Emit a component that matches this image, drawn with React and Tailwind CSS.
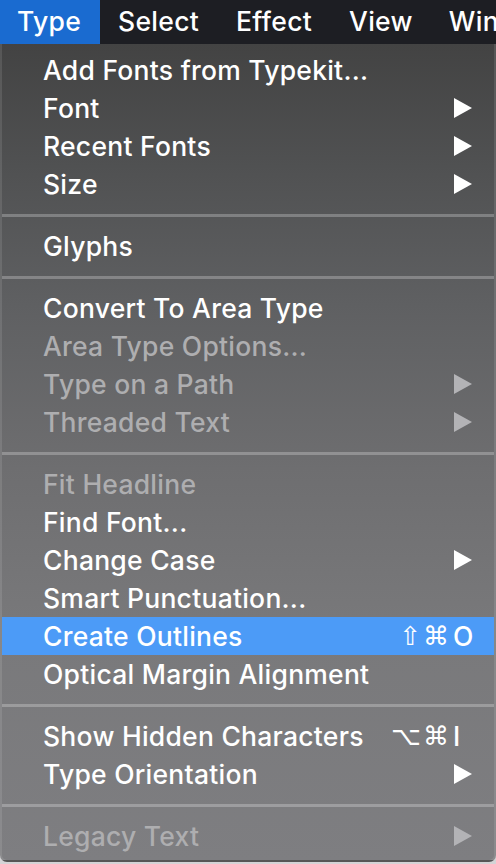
import React from "react";

const Arrow = ({ disabled }) => (
  <svg width="18" height="20" viewBox="0 0 18 20" className="shrink-0">
    <polygon points="0,0 18,10 0,20" fill={disabled ? "#b3b3b6" : "#ffffff"} />
  </svg>
);

const Row = ({ label, arrow, disabled, active, mods, keyChar }) => (
  <div
    className={`h-[38px] flex items-center pl-[41px] pr-[22px] ${
      active ? "bg-[#4c9bf7]" : ""
    }`}
  >
    <span
      className={`flex-1 text-[26.5px] font-medium leading-none tracking-[0.25px] whitespace-nowrap ${
        disabled ? "text-[#aeaeb0]" : "text-white"
      }`}
    >
      {label}
    </span>
    {arrow && <Arrow disabled={disabled} />}
    {mods && (
      <div className="flex items-center text-white leading-none">
        <span className="font-['DejaVu_Sans',sans-serif] text-[26px] tracking-[2px] mr-[2px]">{mods}</span>
        <span className="w-[19px] whitespace-nowrap text-[26.5px] font-medium">{keyChar}</span>
      </div>
    )}
  </div>
);

const Sep = () => (
  <div className="h-[24px] flex items-center">
    <div className="h-[3px] w-full bg-white/25" />
  </div>
);

export default function App() {
  return (
    <div className="w-[496px] h-[864px] bg-[#d4d4d6] overflow-hidden font-['Inter','Noto_Sans',sans-serif] flex flex-col">
      <div className="h-[44px] shrink-0 bg-[#1d1e23] flex items-stretch text-white text-[26.5px] font-medium tracking-[0.3px] overflow-hidden whitespace-nowrap">
        <div className="w-[100px] shrink-0 bg-[#1a6bd0] flex items-center pl-[17px]">Type</div>
        <div className="shrink-0 flex items-center pl-[18px] pr-[18px]">Select</div>
        <div className="shrink-0 flex items-center px-[19px]">Effect</div>
        <div className="shrink-0 flex items-center px-[18px]">View</div>
        <div className="shrink-0 flex items-center px-[18px]">Window</div>
      </div>
      <div className="flex-1 mb-[2px] rounded-b-[7px] border-l-2 border-r-2 border-b-2 border-white/10 bg-[linear-gradient(180deg,#434343_0%,#505152_15%,#5f6062_32%,#6e6e70_52%,#79797b_72%,#7e7e81_100%)] pt-[7px]">
        <Row label="Add Fonts from Typekit..." />
        <Row label="Font" arrow />
        <Row label="Recent Fonts" arrow />
        <Row label="Size" arrow />
        <Sep />
        <Row label="Glyphs" />
        <Sep />
        <Row label="Convert To Area Type" />
        <Row label="Area Type Options..." disabled />
        <Row label="Type on a Path" arrow disabled />
        <Row label="Threaded Text" arrow disabled />
        <Sep />
        <Row label="Fit Headline" disabled />
        <Row label="Find Font..." />
        <Row label="Change Case" arrow />
        <Row label="Smart Punctuation..." />
        <Row label="Create Outlines" active mods="⇧⌘" keyChar="O" />
        <Row label="Optical Margin Alignment" />
        <Sep />
        <Row label="Show Hidden Characters" mods="⌥⌘" keyChar="I" />
        <Row label="Type Orientation" arrow />
        <Sep />
        <Row label="Legacy Text" arrow disabled />
      </div>
    </div>
  );
}
